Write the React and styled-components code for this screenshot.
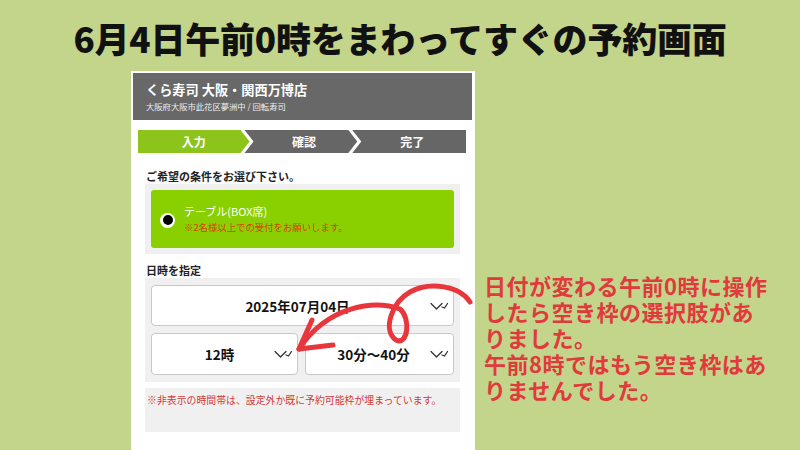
import React from "react";
import styled, { createGlobalStyle } from "styled-components";

const Global = createGlobalStyle`
  html, body { margin: 0; padding: 0; }
  body { background: #c3d48b; font-family: "Noto Sans CJK JP", "Noto Sans", sans-serif; }
`;

const Page = styled.div`
  position: relative;
  width: 800px;
  height: 450px;
  overflow: hidden;
  background: #c3d48b;
`;

const Title = styled.h1`
  margin: 0;
  height: 71px;
  padding-top: 4px;
  box-sizing: border-box;
  display: flex;
  align-items: center;
  justify-content: center;
  font-size: 35px;
  font-weight: 900;
  color: #111;
  letter-spacing: -0.2px;
`;

const Row = styled.div`
  display: flex;
  align-items: flex-start;
  padding-left: 131px;
`;

const Phone = styled.div`
  flex: none;
  width: 344px;
  height: 390px;
  box-sizing: border-box;
  background: #fff;
  padding: 2px 3px 0 2px;
`;

const Header = styled.div`
  height: 47px;
  background: #686868;
  padding: 8px 13px 0;
  box-sizing: border-box;
  color: #fff;
`;

const ShopName = styled.div`
  font-size: 13.2px;
  font-weight: 700;
  line-height: 18px;
`;

const ShopSub = styled.div`
  font-size: 8.3px;
  line-height: 12px;
  margin-top: 1px;
  color: #eee;
`;

const Body = styled.div`
  padding: 10px 6px 0 5px;
`;

const Steps = styled.div`
  display: flex;
  height: 23px;
`;

const Step = styled.div`
  flex: ${(p) => p.$flex};
  margin-left: ${(p) => (p.$first ? "0" : "-7px")};
  background: ${(p) => (p.$active ? "#8cc41c" : "#666")};
  color: #fff;
  font-size: 12px;
  font-weight: 700;
  display: flex;
  align-items: center;
  justify-content: center;
  clip-path: ${(p) =>
    p.$first
      ? "polygon(0 0, calc(100% - 9px) 0, 100% 50%, calc(100% - 9px) 100%, 0 100%)"
      : p.$last
      ? "polygon(2px 0, 100% 0, 100% 100%, 2px 100%, 11px 50%)"
      : "polygon(2px 0, calc(100% - 9px) 0, 100% 50%, calc(100% - 9px) 100%, 2px 100%, 11px 50%)"};
  padding-left: ${(p) => (p.$first ? "0" : "8px")};
`;

const Label = styled.div`
  font-size: 11px;
  font-weight: 700;
  color: #222;
  margin: ${(p) => p.$m};
  padding-left: 8px;
  line-height: 15px;
`;

const GrayBox = styled.div`
  background: #f0f0f0;
  margin: ${(p) => p.$m || "0 6px 0 7px"};
  padding: ${(p) => p.$pad || "6px"};
  display: flex;
  flex-direction: column;
  gap: 7px;
  min-height: ${(p) => p.$h || "auto"};
  box-sizing: border-box;
`;

const Option = styled.div`
  height: 58px;
  background: #8ad000;
  border-radius: 3px;
  display: flex;
  align-items: center;
  padding-left: 9px;
  gap: 9px;
`;

const Radio = styled.div`
  width: 15px;
  height: 15px;
  border-radius: 50%;
  background: #fff;
  display: flex;
  align-items: center;
  justify-content: center;
  margin-top: 2px;
  &::after {
    content: "";
    width: 10px;
    height: 10px;
    border-radius: 50%;
    background: #000;
  }
`;

const OptText = styled.div`
  display: flex;
  flex-direction: column;
`;

const OptTitle = styled.div`
  color: #fff;
  font-size: 11px;
  line-height: 16px;
`;

const OptNote = styled.div`
  color: #d6420a;
  font-size: 9.4px;
  line-height: 16px;
`;

const Select = styled.div`
  position: relative;
  flex: ${(p) => (p.$grow ? "1" : "none")};
  height: ${(p) => p.$h}px;
  background: #fff;
  border: 1px solid #c9c9c9;
  border-radius: 4px;
  box-sizing: border-box;
  display: flex;
  align-items: center;
  justify-content: center;
  padding-right: ${(p) => p.$pr || 0}px;
  font-size: 13.5px;
  font-weight: 700;
  color: #111;
`;

const SelRow = styled.div`
  display: flex;
  gap: 7px;
`;

const Chevron = styled.svg`
  position: absolute;
  right: 4px;
  top: 50%;
  margin-top: -5px;
`;

const Note = styled.div`
  color: #d03a3a;
  font-size: 9.9px;
  line-height: 12px;
  white-space: nowrap;
`;

const Annotation = styled.div`
  flex: none;
  margin: 201px 0 0 9px;
  color: #e03a3c;
  font-size: 22px;
  font-weight: 700;
  line-height: 26px;
  letter-spacing: 0.5px;
  white-space: nowrap;
`;

const ArrowSvg = styled.svg`
  position: absolute;
  left: 0;
  top: 0;
  pointer-events: none;
`;

const Chev = () => (
  <Chevron width="20" height="10" viewBox="0 0 20 10">
    <path
      d="M2 2.5 L7.5 8 L13 2.5 M13 6 L15.5 7 L18.5 2.5"
      fill="none"
      stroke="#333"
      strokeWidth="1.3"
      strokeLinejoin="round"
      strokeLinecap="round"
    />
  </Chevron>
);

export default function App() {
  return (
    <>
      <Global />
      <Page>
        <Title>6月4日午前0時をまわってすぐの予約画面</Title>
        <Row>
          <Phone>
            <Header>
              <ShopName>くら寿司 大阪・関西万博店</ShopName>
              <ShopSub>大阪府大阪市此花区夢洲中 / 回転寿司</ShopSub>
            </Header>
            <Body>
              <Steps>
                <Step $first $active $flex="117">入力</Step>
                <Step $flex="112">確認</Step>
                <Step $last $flex="113">完了</Step>
              </Steps>
              <Label $m="16px 0 0">ご希望の条件をお選び下さい。</Label>
              <GrayBox>
                <Option>
                  <Radio />
                  <OptText>
                    <OptTitle>テーブル(BOX席)</OptTitle>
                    <OptNote>※2名様以上での受付をお願いします。</OptNote>
                  </OptText>
                </Option>
              </GrayBox>
              <Label $m="9px 0 0">日時を指定</Label>
              <GrayBox $pad="7px 6px">
                <Select $h={41} $pr={10}>
                  2025年07月04日
                  <Chev />
                </Select>
                <SelRow>
                  <Select $grow $h={42} $pr={10}>
                    12時
                    <Chev />
                  </Select>
                  <Select $grow $h={42} $pr={12}>
                    30分〜40分
                    <Chev />
                  </Select>
                </SelRow>
              </GrayBox>
              <GrayBox $pad="6px 6px 6px 2px" $h="44px" $m="6px 6px 0 7px">
                <Note>※非表示の時間帯は、設定外か既に予約可能枠が埋まっています。</Note>
              </GrayBox>
            </Body>
          </Phone>
          <Annotation>
            日付が変わる午前0時に操作
            <br />
            したら空き枠の選択肢があ
            <br />
            りました。
            <br />
            午前8時ではもう空き枠はあ
            <br />
            りませんでした。
          </Annotation>
        </Row>
        <ArrowSvg width="800" height="450" viewBox="0 0 800 450">
          <path
            d="M470 302 C 460 286, 430 281, 410 292 C 392 302, 382 330, 396 340 C 408 346, 411 318, 400 309 C 375 300, 328 305, 299 349"
            fill="none"
            stroke="#e8373c"
            strokeWidth="5"
            strokeLinecap="round"
            strokeLinejoin="round"
          />
          <path
            d="M312 320 L299 349 L333 345"
            fill="none"
            stroke="#e8373c"
            strokeWidth="5"
            strokeLinecap="round"
            strokeLinejoin="round"
          />
        </ArrowSvg>
      </Page>
    </>
  );
}
